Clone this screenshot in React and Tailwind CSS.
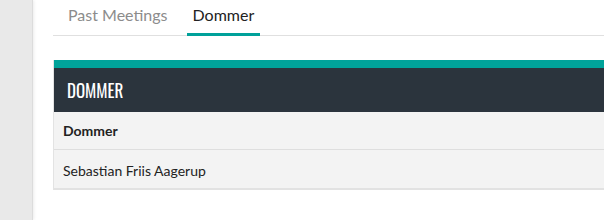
const tabs = ['Past Meetings', 'Dommer']

const App = () => {
  const active = 'Dommer'

  return (
    <div className="flex h-[220px] w-[604px] overflow-hidden bg-white font-['Lato','Liberation_Sans',sans-serif]">
      {/* Sidebar strip */}
      <div className="w-[33px] shrink-0 border-r border-[#dcdcdc] bg-[#e9e9e9] shadow-[1px_0_3px_rgba(0,0,0,0.08)]" />

      <div className="flex-1 pl-[20px] pt-[1px]">
        {/* Tabs */}
        <div className="flex gap-[13px] border-b border-[#e0e0e0] pl-[9px]">
          {tabs.map(tab => (
            <button
              key={tab}
              className={`-mb-px h-[35px] border-b-[3px] px-[6px] pb-[4px] text-[16px] leading-none ${
                tab === active
                  ? 'border-[#00a19a] text-[#222]'
                  : 'border-transparent text-[#8c8c8c]'
              }`}
            >
              {tab}
            </button>
          ))}
        </div>

        {/* Panel */}
        <div className="mt-[24px] border-l border-[#e3e3e3]">
          <div className="h-[8px] bg-[#00a39a]" />
          <div className="flex h-[44px] items-center bg-[#2b343d] pl-[13px]">
            <span className="font-['Oswald','Liberation_Sans_Narrow','DejaVu_Sans_Condensed',sans-serif] text-[17px] uppercase text-white [transform:scaleY(1.1)]">
              Dommer
            </span>
          </div>
          <div className="flex h-[38px] items-center border-b border-[#dedede] bg-[#f3f3f3] pl-[9px] text-[14px] font-bold text-[#222]">
            Dommer
          </div>
          <div className="flex h-[40px] items-center border-b-2 border-[#e2e2e2] bg-[#f3f3f3] pl-[9px] pt-[2px] text-[14px] text-[#222]">
            Sebastian Friis Aagerup
          </div>
        </div>
      </div>
    </div>
  )
}

export default App
